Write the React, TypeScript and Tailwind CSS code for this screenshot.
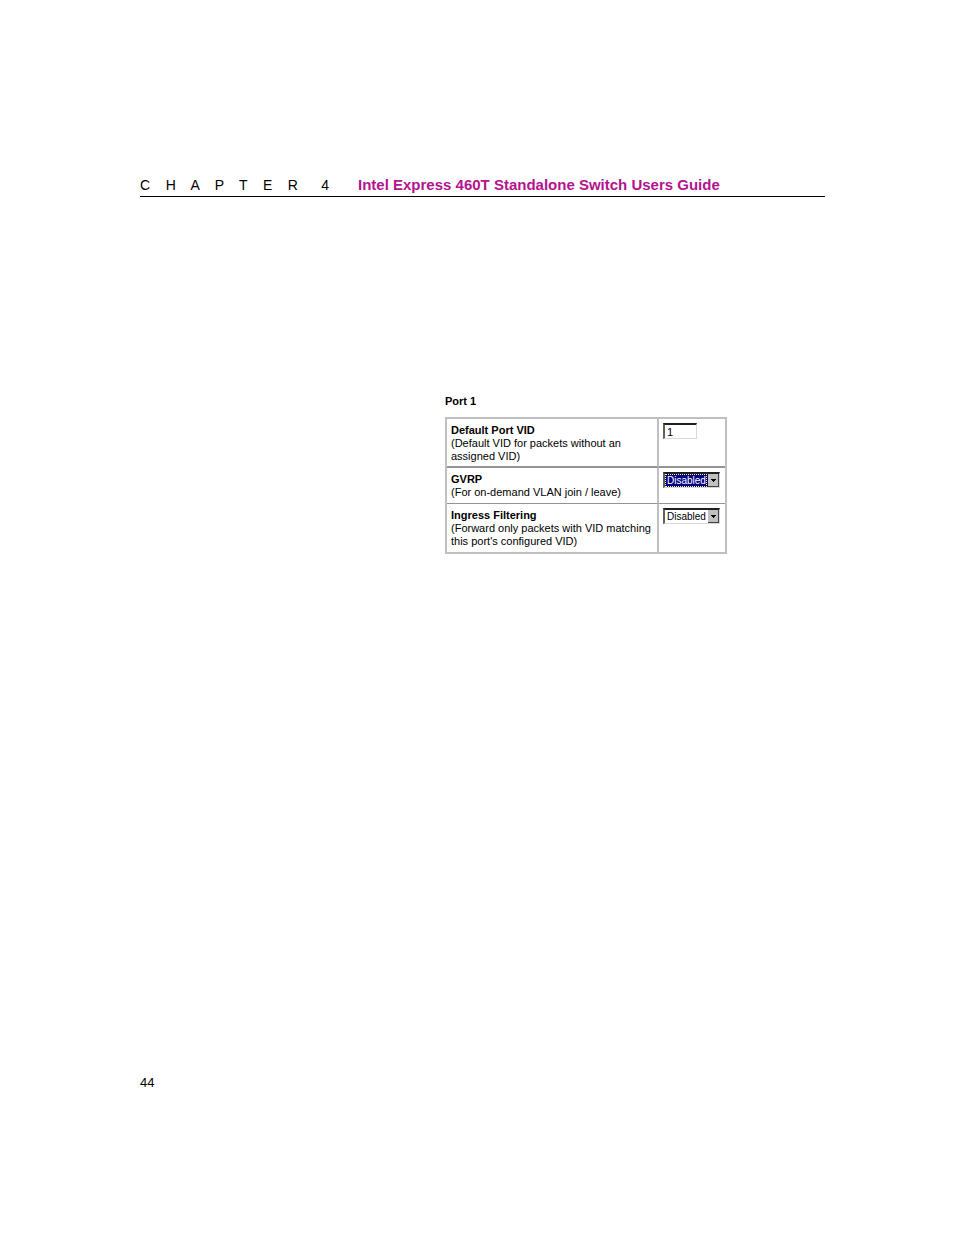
import React, { useState } from 'react';

interface PortSelectProps {
  id: string;
  label: string;
  highlighted?: boolean;
}

const PortSelect: React.FC<PortSelectProps> = ({ id, label, highlighted }) => {
  const [value, setValue] = useState('Disabled');

  return (
    <div className="relative h-4 w-[57px]">
      <select
        id={id}
        aria-label={label}
        value={value}
        onChange={e => setValue(e.target.value)}
        className={`block h-4 w-full appearance-none rounded-none border-t-2 border-l-2 border-r border-b border-t-[#202020] border-l-[#606060] border-r-[#d8d8d8] border-b-[#d8d8d8] pl-[2px] text-[10px] leading-[13px] outline-none ${highlighted ? 'bg-[#000084] text-white' : 'bg-white text-black'}`}
      >
        <option>Disabled</option>
        <option>Enabled</option>
      </select>
      {highlighted && <span className="pointer-events-none absolute top-[2px] left-[2px] h-[13px] w-[42px] border border-dotted border-[#ffff7b]" />}
      <span className="pointer-events-none absolute top-[2px] right-px flex h-[13px] w-[11px] items-center justify-center border-r border-b border-[#404040] bg-[#c0c0c0]">
        <svg className="h-[3px] w-[5px]" viewBox="0 0 5 3" fill="black" shapeRendering="crispEdges"><path d="M0 0h5v1H4v1H3v1H2V2H1V1H0z" /></svg>
      </span>
    </div>
  );
};

const App: React.FC = () => {
  const [vid, setVid] = useState('1');

  return (
    <div className="min-h-screen bg-white pt-[177px] pr-[129px] pb-[143px] pl-[140px] font-['Liberation_Sans',Arial,sans-serif] text-black">
      <header className="flex h-5 items-start border-b border-black leading-4">
        <p className="w-[218px] text-[14px] leading-4 whitespace-pre">C    H    A    P    T    E    R      4</p>
        <h1 className="text-[15px] leading-4 font-bold whitespace-nowrap text-[#b5128f]">Intel Express 460T Standalone Switch Users Guide</h1>
      </header>

      <main className="mt-[198px] ml-[305px] w-[282px] text-[11px] leading-[13px]">
        <h2 className="font-bold">Port 1</h2>
        <table className="mt-[9px] w-full table-fixed border-separate border-spacing-0 border-2 border-[#c0c0c0]">
          <tbody className="align-top">
            <tr className="h-[49px]">
              <td className="w-[212px] border-r-2 border-b-2 border-r-[#c0c0c0] border-b-[#949494] pt-[5px] pl-1">
                <label htmlFor="vid" className="block font-bold">Default Port VID</label>
                <p>(Default VID for packets without an<br />assigned VID)</p>
              </td>
              <td className="border-b-2 border-[#949494] pt-1 pl-1">
                <input
                  id="vid"
                  value={vid}
                  onChange={e => setVid(e.target.value)}
                  className="block h-4 w-[34px] border-t-2 border-l-2 border-r border-b border-t-[#202020] border-l-[#606060] border-r-[#d8d8d8] border-b-[#d8d8d8] pl-[2px] outline-none"
                />
              </td>
            </tr>
            <tr className="h-9">
              <td className="border-r-2 border-b border-r-[#c0c0c0] border-b-[#949494] pt-[5px] pl-1">
                <label htmlFor="gvrp" className="block font-bold">GVRP</label>
                <p>(For on-demand VLAN join / leave)</p>
              </td>
              <td className="border-b border-[#949494] pt-1 pl-1">
                <PortSelect id="gvrp" label="GVRP" highlighted />
              </td>
            </tr>
            <tr className="h-12">
              <td className="border-r-2 border-[#c0c0c0] pt-[5px] pl-1">
                <label htmlFor="ingress" className="block font-bold">Ingress Filtering</label>
                <p>(Forward only packets with VID matching<br />this port's configured VID)</p>
              </td>
              <td className="pt-1 pl-1">
                <PortSelect id="ingress" label="Ingress Filtering" />
              </td>
            </tr>
          </tbody>
        </table>
      </main>

      <footer className="mt-[521px] text-[13px] leading-4">44</footer>
    </div>
  );
};

export default App;
